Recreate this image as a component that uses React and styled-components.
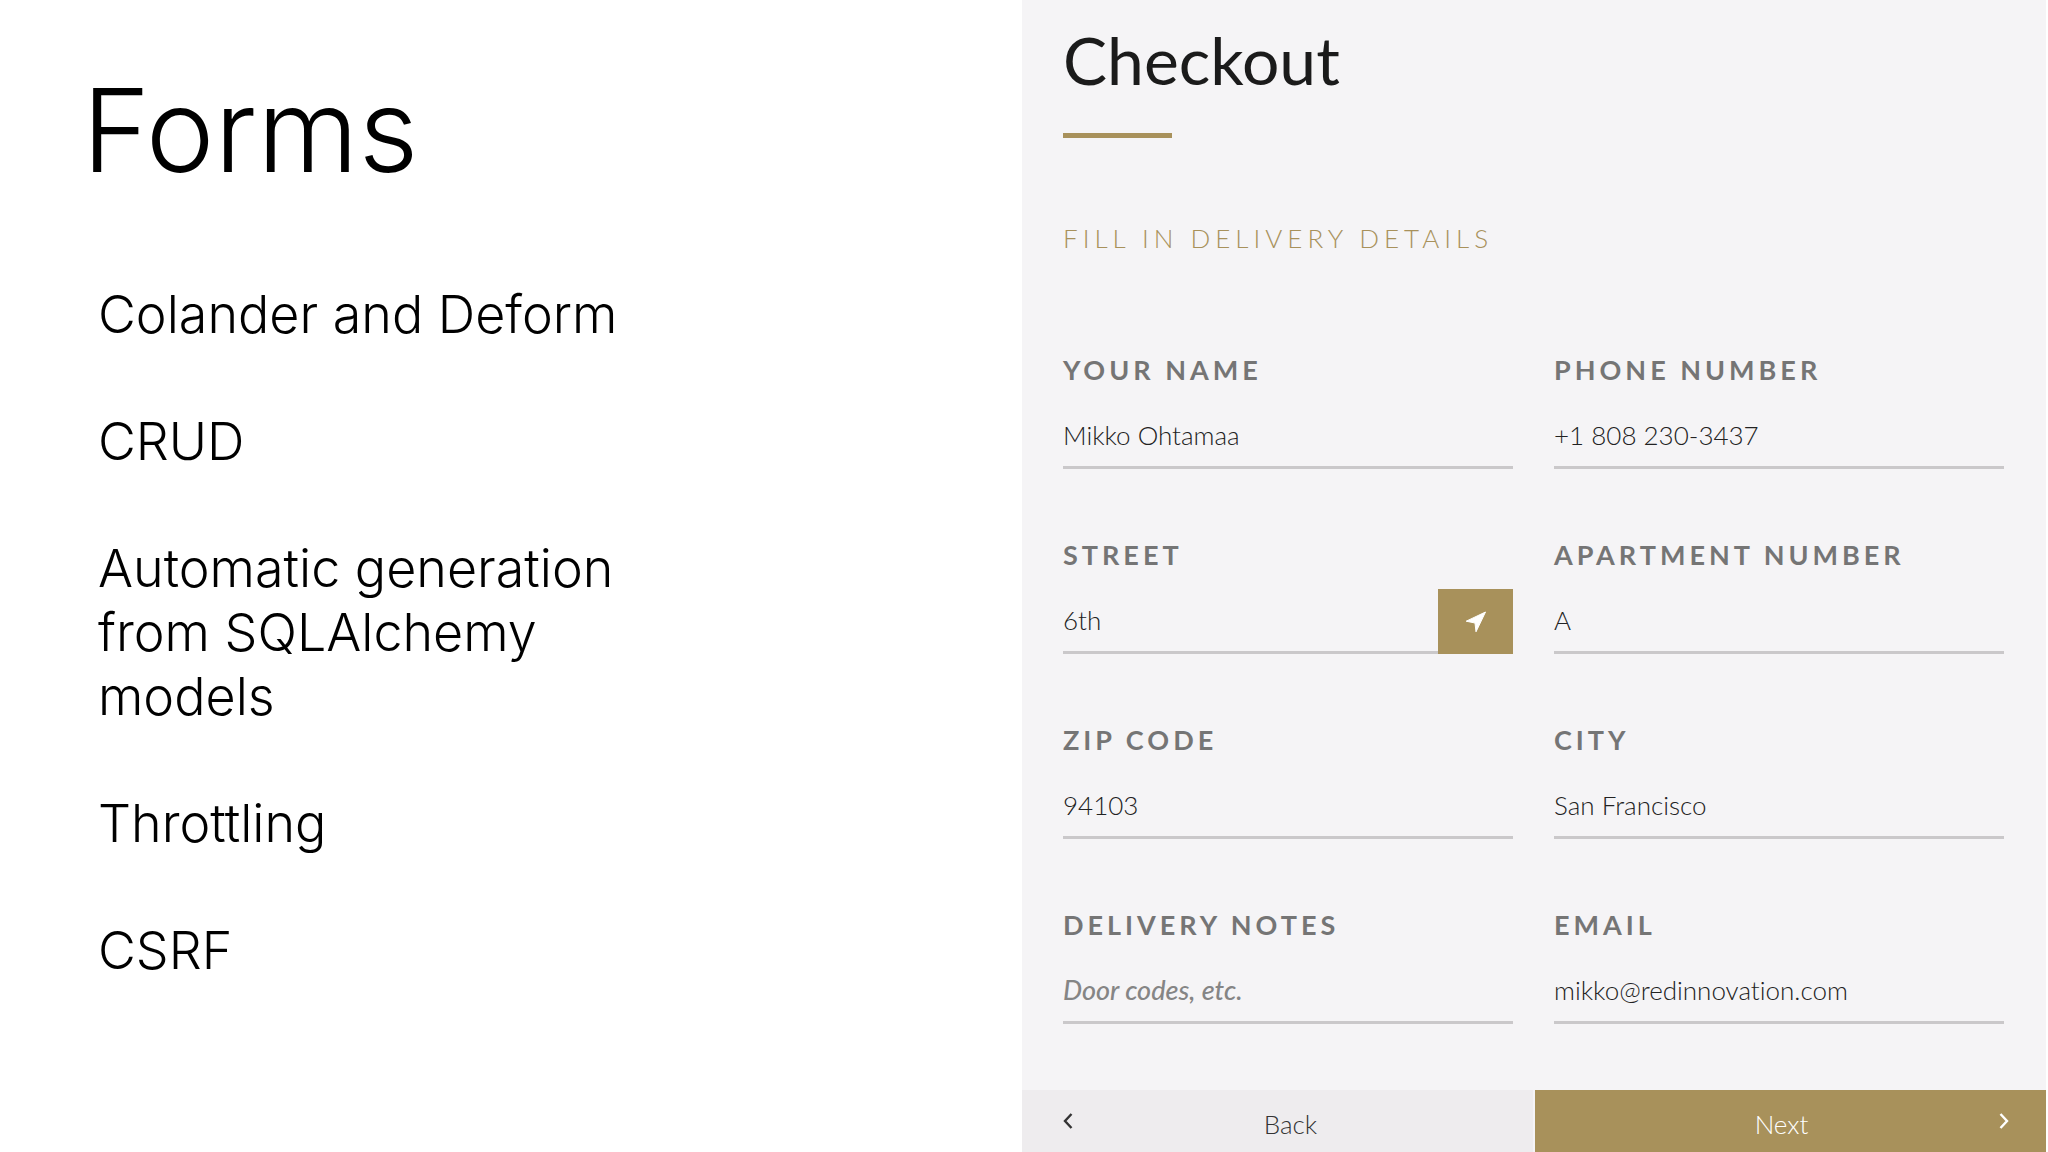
import React from "react";
import styled, { createGlobalStyle } from "styled-components";

const GlobalStyle = createGlobalStyle`
  *, *::before, *::after {
    box-sizing: border-box;
  }
  body {
    margin: 0;
    background: #fff;
  }
`;

const gold = "#a8915b";

const Slide = styled.main`
  display: flex;
  min-height: 100vh;
  padding-right: 2px;
  background: #fff;
`;

const Outline = styled.section`
  flex: 1;
  padding: 58px 88px 0 82px;
  color: #000;
  font-family: Inter, "Helvetica Neue", sans-serif;
  font-weight: 300;
`;

const OutlineTitle = styled.h1`
  margin: 0 0 81px;
  font-size: 116px;
  font-weight: 300;
  line-height: 144px;
`;

const Topics = styled.ul`
  display: flex;
  flex-direction: column;
  gap: 63px;
  max-width: 560px;
  margin: 0;
  padding: 0 0 0 16px;
  list-style: none;
  font-size: 52px;
  line-height: 64px;
`;

const CheckoutPanel = styled.form`
  flex: 0 0 calc(50% + 1px);
  display: flex;
  flex-direction: column;
  background: #f5f4f6;
  font-family: Lato, sans-serif;
  font-size: 27px;
`;

const PanelBody = styled.div`
  padding: 20px 42px 40px 41px;
`;

const PanelTitle = styled.h2`
  margin: 0;
  color: #1b1b1b;
  font-size: 66px;
  font-weight: 400;
  line-height: 80px;

  &:after {
    content: "";
    display: block;
    width: 109px;
    height: 5px;
    margin-top: 33px;
    background: ${gold};
  }
`;

const PanelSubtitle = styled.h3`
  margin: 84px 0 100px;
  color: ${gold};
  font-size: 26px;
  font-weight: 300;
  line-height: 32px;
  letter-spacing: 5px;
  text-transform: uppercase;
`;

const Fields = styled.div`
  display: grid;
  grid-template-columns: 1fr 1fr;
  gap: 70px 41px;
`;

const Field = styled.div`
  display: flex;
  flex-direction: column;
  gap: 18px;
  min-width: 0;
`;

const Label = styled.label`
  color: #757575;
  font-weight: 700;
  line-height: 32px;
  letter-spacing: 4px;
  text-transform: uppercase;
`;

const InputGroup = styled.div`
  display: flex;
`;

const Input = styled.input`
  flex: 1;
  min-width: 0;
  height: 65px;
  padding: 0;
  border: 0;
  border-bottom: 3px solid #cac8ca;
  border-radius: 0;
  outline: none;
  background: transparent;
  color: #222;
  font: 300 26px Lato, sans-serif;
  font-variant-ligatures: none;

  &::placeholder {
    color: #858585;
    font-size: 27px;
    font-style: italic;
    font-weight: 500;
    opacity: 1;
  }
`;

const LocateButton = styled.button`
  display: flex;
  align-items: center;
  justify-content: center;
  width: 75px;
  padding: 0;
  border: 0;
  background: ${gold};
  color: #fff;
  cursor: pointer;
`;

const Footer = styled.div`
  display: grid;
  grid-template-columns: 1fr 1fr;
  gap: 2px;
  margin-top: auto;
`;

const FooterButton = styled.button`
  display: flex;
  align-items: center;
  gap: 12px;
  height: 62px;
  padding: 0 37px 0 41px;
  border: 0;
  background: ${(props) => (props.$primary ? gold : "#eeecee")};
  color: ${(props) => (props.$primary ? "#fff" : "#333")};
  font: 300 26px Lato, sans-serif;
  cursor: pointer;
`;

const ButtonText = styled.span`
  flex: 1;
  padding-top: 6px;
`;

const Chevron = ({ d }) => (
  <svg width="10" height="16" viewBox="0 0 10 16" fill="none" aria-hidden="true">
    <path d={d} stroke="currentColor" strokeWidth="2.4" />
  </svg>
);

const LocateIcon = () => (
  <svg width="22" height="22" viewBox="0 0 22 22" aria-hidden="true">
    <path
      d="M20.5 1 1.2 10.2 10 12 11 20.8Z"
      fill="currentColor"
      stroke="currentColor"
      strokeLinejoin="round"
    />
  </svg>
);

const topics = [
  "Colander and Deform",
  "CRUD",
  "Automatic generation from SQLAlchemy models",
  "Throttling",
  "CSRF",
];

const fields = [
  { id: "name", label: "Your name", value: "Mikko Ohtamaa" },
  { id: "phone", label: "Phone number", value: "+1 808 230-3437", type: "tel" },
  { id: "street", label: "Street", value: "6th", locate: true },
  { id: "apartment", label: "Apartment number", value: "A" },
  { id: "zip", label: "Zip code", value: "94103" },
  { id: "city", label: "City", value: "San Francisco" },
  { id: "notes", label: "Delivery notes", placeholder: "Door codes, etc." },
  { id: "email", label: "Email", value: "mikko@redinnovation.com", type: "email" },
];

function App() {
  return (
    <>
      <GlobalStyle />
      <Slide>
        <Outline>
          <OutlineTitle>Forms</OutlineTitle>
          <Topics>
            {topics.map((topic) => (
              <li key={topic}>{topic}</li>
            ))}
          </Topics>
        </Outline>

        <CheckoutPanel onSubmit={(e) => e.preventDefault()}>
          <PanelBody>
            <PanelTitle>Checkout</PanelTitle>
            <PanelSubtitle>Fill in delivery details</PanelSubtitle>
            <Fields>
              {fields.map((field) => (
                <Field key={field.id}>
                  <Label htmlFor={field.id}>{field.label}</Label>
                  <InputGroup>
                    <Input
                      id={field.id}
                      type={field.type || "text"}
                      defaultValue={field.value}
                      placeholder={field.placeholder}
                    />
                    {field.locate && (
                      <LocateButton type="button" aria-label="Use my location">
                        <LocateIcon />
                      </LocateButton>
                    )}
                  </InputGroup>
                </Field>
              ))}
            </Fields>
          </PanelBody>

          <Footer>
            <FooterButton type="button">
              <Chevron d="M8.5 1 2 8l6.5 7" />
              <ButtonText>Back</ButtonText>
            </FooterButton>
            <FooterButton type="submit" $primary>
              <ButtonText>Next</ButtonText>
              <Chevron d="M1.5 1 8 8l-6.5 7" />
            </FooterButton>
          </Footer>
        </CheckoutPanel>
      </Slide>
    </>
  );
}

export default App;
